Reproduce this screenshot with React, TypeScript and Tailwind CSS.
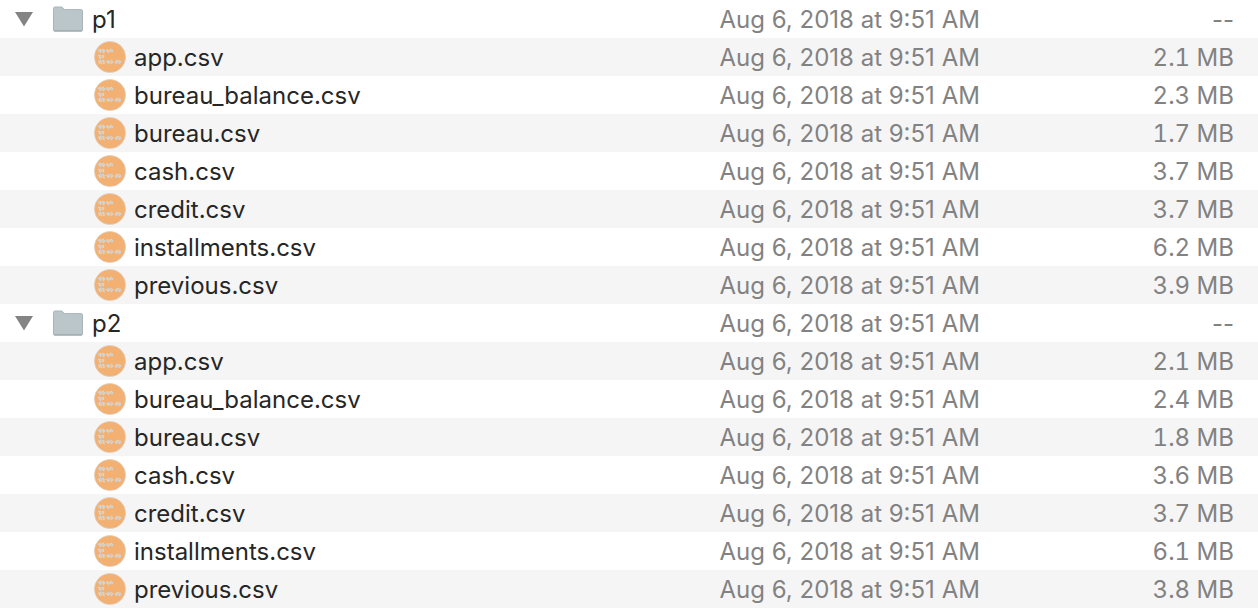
import { useState } from "react";

type CsvFile = { name: string; size: string };
type Folder = { name: string; files: CsvFile[] };

const MODIFIED = "Aug 6, 2018 at 9:51 AM";

const folders: Folder[] = [
  {
    name: "p1",
    files: [
      { name: "app.csv", size: "2.1 MB" },
      { name: "bureau_balance.csv", size: "2.3 MB" },
      { name: "bureau.csv", size: "1.7 MB" },
      { name: "cash.csv", size: "3.7 MB" },
      { name: "credit.csv", size: "3.7 MB" },
      { name: "installments.csv", size: "6.2 MB" },
      { name: "previous.csv", size: "3.9 MB" },
    ],
  },
  {
    name: "p2",
    files: [
      { name: "app.csv", size: "2.1 MB" },
      { name: "bureau_balance.csv", size: "2.4 MB" },
      { name: "bureau.csv", size: "1.8 MB" },
      { name: "cash.csv", size: "3.6 MB" },
      { name: "credit.csv", size: "3.7 MB" },
      { name: "installments.csv", size: "6.1 MB" },
      { name: "previous.csv", size: "3.8 MB" },
    ],
  },
];

function FolderIcon() {
  return (
    <svg width="32" height="26" viewBox="0 0 32 26" aria-hidden="true" className="shrink-0">
      <path
        d="M1.5 24V2.5Q1.5 1 3 1h6.2q1 0 1.6.8l.9 1.2q.5.6 1.4.6H29q1.5 0 1.5 1.5V24q0 1-1 1h-27q-1 0-1-1z"
        fill="#bac6ca"
        stroke="#a9b5b9"
      />
      <path d="M2 25h28" stroke="#98a2a6" />
    </svg>
  );
}

function CsvIcon() {
  return (
    <svg width="32" height="32" viewBox="0 0 32 32" aria-hidden="true" className="shrink-0">
      <circle cx="16" cy="16" r="15.6" fill="#f2b172" stroke="#dccfc2" strokeWidth=".7" />
      <g fill="#d6d3ce" stroke="#d6d3ce" strokeWidth=".3">
        <path d="M5 8h2v1H5zM8 8h2v1H8zM4 9h1v1H4zM6 9h2v1H6zM9 9h2v1H9zM13 8h1v1h-1zM16 8h2v1h-2zM12 9h2v1h-2zM15 9h2v1h-2zM18 9h1v1h-1zM5 10h2v1H5zM8 10h3v1H8zM13 10h3v1h-3zM17 10h2v1h-2zM6 11h1v1H6zM9 11h1v1H9zM14 11h1v1h-1z" />
        <path d="M4 14h3v1H4zM8 14h2v1H8zM5 15h1v1H5zM7 15h1v1H7zM9 15h1v1H9zM5 16h2v1H5zM8 16h2v1H8zM6 17h1v1H6z" />
        <path d="M5 19h2v1H5zM8 19h2v1H8zM4 20h2v1H4zM7 20h1v1H7zM9 20h2v1H9zM5 21h3v1H5zM9 21h1v1H9zM5 22h1v1H5zM7 22h1v1H7zM9 22h2v1H9zM14 19h1v1h-1zM17 19h1v1h-1zM12 20h2v1h-2zM15 20h2v1h-2zM18 20h1v1h-1zM13 21h3v1h-3zM17 21h2v1h-2zM14 22h1v1h-1zM17 22h1v1h-1zM22 19h2v1h-2zM25 19h1v1h-1zM21 20h1v1h-1zM23 20h2v1h-2zM26 20h1v1h-1zM21 21h2v1h-2zM24 21h3v1h-3zM22 22h1v1h-1zM25 22h1v1h-1z" />
      </g>
    </svg>
  );
}

export default function App() {
  const [closed, setClosed] = useState<string[]>([]);
  const toggle = (name: string) =>
    setClosed((c) => (c.includes(name) ? c.filter((n) => n !== name) : [...c, name]));

  return (
    <main className="min-h-screen bg-white font-['Inter',sans-serif] text-2xl">
      <table className="w-full table-fixed border-collapse whitespace-nowrap text-[#828282]">
        <colgroup>
          <col className="w-[57.2%]" />
          <col className="w-[26%]" />
          <col />
        </colgroup>
        <tbody>
          {folders.flatMap((folder) => {
            const open = !closed.includes(folder.name);
            return [
              <tr key={folder.name} className="h-[38px] even:bg-[#f5f5f5]">
                <td className="p-0">
                  <div className="flex items-center pl-3.5 text-[#262626]">
                    <button
                      type="button"
                      aria-label={"Toggle folder " + folder.name}
                      aria-expanded={open}
                      onClick={() => toggle(folder.name)}
                      className="mr-[18px] flex w-5 justify-center"
                    >
                      <svg width="20" height="16" viewBox="0 0 20 16" className={open ? "" : "-rotate-90"}>
                        <path d="M1 1h18l-9 14.500z" fill="#848484" />
                      </svg>
                    </button>
                    <span className="mr-2 flex">
                      <FolderIcon />
                    </span>
                    <span className="pt-0.5">{folder.name}</span>
                  </div>
                </td>
                <td className="px-0 pt-0.5 pb-0">{MODIFIED}</td>
                <td className="pt-0.5 pr-6 pb-0 pl-0 text-right">--</td>
              </tr>,
              ...(open ? folder.files : []).map((file) => (
                <tr key={folder.name + "/" + file.name} className="h-[38px] even:bg-[#f5f5f5]">
                  <td className="p-0">
                    <div className="flex items-center gap-2 pl-[94px] text-[#262626]">
                      <CsvIcon />
                      <span className="pt-0.5">{file.name}</span>
                    </div>
                  </td>
                  <td className="px-0 pt-0.5 pb-0">{MODIFIED}</td>
                  <td className="pt-0.5 pr-6 pb-0 pl-0 text-right tabular-nums">{file.size}</td>
                </tr>
              )),
            ];
          })}
        </tbody>
      </table>
    </main>
  );
}
